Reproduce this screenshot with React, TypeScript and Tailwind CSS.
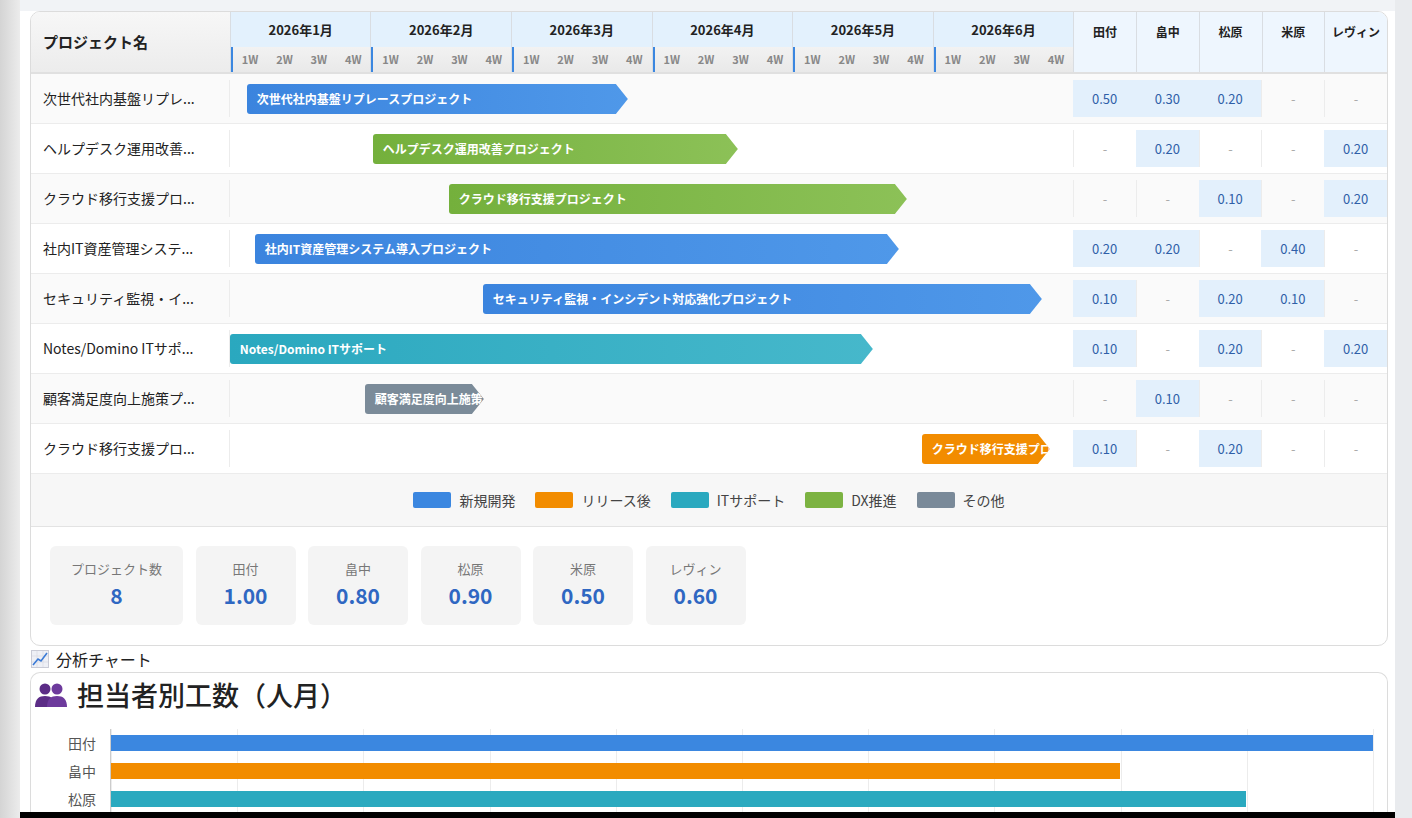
const months = ["2026年1月", "2026年2月", "2026年3月", "2026年4月", "2026年5月", "2026年6月"];
const members = ["田付", "畠中", "松原", "米原", "レヴィン"];

const colors: Record<string, string> = {
  dev: "bg-gradient-to-r from-[#3b84de] to-[#4f98e9]",
  green: "bg-gradient-to-r from-[#74b03c] to-[#8cc157]",
  teal: "bg-gradient-to-r from-[#2aa8bf] to-[#46b8cb]",
  gray: "bg-[#7b8b99]",
  orange: "bg-[#f28c00]",
};

const rows = [
  { short: "次世代社内基盤リプレ...", name: "次世代社内基盤リプレースプロジェクト", c: "dev", s: 17, e: 398, v: ["0.50", "0.30", "0.20", "-", "-"] },
  { short: "ヘルプデスク運用改善...", name: "ヘルプデスク運用改善プロジェクト", c: "green", s: 143, e: 508, v: ["-", "0.20", "-", "-", "0.20"] },
  { short: "クラウド移行支援プロ...", name: "クラウド移行支援プロジェクト", c: "green", s: 219, e: 677, v: ["-", "-", "0.10", "-", "0.20"] },
  { short: "社内IT資産管理システ...", name: "社内IT資産管理システム導入プロジェクト", c: "dev", s: 25, e: 669, v: ["0.20", "0.20", "-", "0.40", "-"] },
  { short: "セキュリティ監視・イ...", name: "セキュリティ監視・インシデント対応強化プロジェクト", c: "dev", s: 253, e: 812, v: ["0.10", "-", "0.20", "0.10", "-"] },
  { short: "Notes/Domino ITサポ...", name: "Notes/Domino ITサポート", c: "teal", s: 0, e: 643, v: ["0.10", "-", "0.20", "-", "0.20"] },
  { short: "顧客満足度向上施策プ...", name: "顧客満足度向上施策プロジェクト", c: "gray", s: 135, e: 254, v: ["-", "0.10", "-", "-", "-"] },
  { short: "クラウド移行支援プロ...", name: "クラウド移行支援プロジェクト", c: "orange", s: 692, e: 820, v: ["0.10", "-", "0.20", "-", "-"] },
];

const legend = [
  ["新規開発", "bg-[#3b87e0]"],
  ["リリース後", "bg-[#f28c00]"],
  ["ITサポート", "bg-[#2aa9bf]"],
  ["DX推進", "bg-[#7cb342]"],
  ["その他", "bg-[#7a8a99]"],
];

const stats = [
  ["プロジェクト数", "8", "w-[133px]"],
  ["田付", "1.00", "w-[100px]"],
  ["畠中", "0.80", "w-[100px]"],
  ["松原", "0.90", "w-[100px]"],
  ["米原", "0.50", "w-[100px]"],
  ["レヴィン", "0.60", "w-[100px]"],
];

const chart = [
  ["田付", 1262, "bg-[#3b87e0]"],
  ["畠中", 1009, "bg-[#f28c00]"],
  ["松原", 1135, "bg-[#2aa9bf]"],
] as const;

export default function App() {
  return (
    <div className="h-[818px] w-[1412px] overflow-hidden bg-[#eef0f3] flex text-[#222]" style={{ fontFamily: '"Noto Sans CJK JP", "Noto Sans", sans-serif' }}>
      <div className="w-[20px] shrink-0 bg-gradient-to-r from-[#d4d4d4] to-[#ececec]" />
      <div className="w-[1375px] shrink-0 bg-white flex flex-col">
        <div className="h-[11px] bg-[#f1f3f6] shrink-0" />
        <div className="flex-1 min-h-0 overflow-hidden px-[10px] flex flex-col">
          {/* Gantt card */}
          <div className="w-[1358px] shrink-0 border border-[#dcdcdc] rounded-[10px] overflow-hidden">
            <div className="flex h-[62px] border-b-2 border-[#e0e0e0]">
              <div className="w-[199px] bg-gradient-to-b from-[#f7f7f7] to-[#ececec] flex items-center pl-[12px] font-bold text-[15px]">プロジェクト名</div>
              {months.map((m) => (
                <div key={m} className="w-[140.67px] flex flex-col border-l border-[#d9dde2]">
                  <div className="h-[36px] bg-[#e3f1fd] flex items-center justify-center font-bold text-[13px]">{m}</div>
                  <div className="h-[26px] flex border-l-2 border-[#3b87e0] bg-gradient-to-b from-[#f2f2f2] to-[#e9e9e9]">
                    {["1W", "2W", "3W", "4W"].map((w) => (
                      <div key={w} className="flex-1 flex items-center justify-center text-[11px] text-[#888] font-semibold">{w}</div>
                    ))}
                  </div>
                </div>
              ))}
              {members.map((m) => (
                <div key={m} className="w-[62.8px] bg-[#eef6fe] border-l border-[#d9dde2] flex justify-center pt-[11px] font-bold text-[12px]">{m}</div>
              ))}
            </div>
            {rows.map((r, i) => (
              <div key={i} className={`flex h-[50px] border-b border-[#ececec] ${i % 2 === 0 ? "bg-[#fafafa]" : "bg-white"}`}>
                <div className="w-[199px] flex items-center pl-[12px] text-[14px] border-r border-[#ececec] my-[6px]">{r.short}</div>
                <div className="w-[844px] relative">
                  <div
                    className={`absolute top-[10px] h-[30px] rounded-l-[3px] overflow-hidden flex items-center pl-[10px] text-white text-[12px] font-bold whitespace-nowrap ${colors[r.c]}`}
                    style={{ left: r.s, width: r.e - r.s, clipPath: "polygon(0 0, calc(100% - 12px) 0, 100% 50%, calc(100% - 12px) 100%, 0 100%)" }}
                  >
                    {r.name}
                  </div>
                </div>
                {r.v.map((v, j) => (
                  <div key={j} className={`w-[62.8px] my-[6px] flex items-center justify-center text-[13px] ${v === "-" ? "text-[#aaa] border-l border-[#ececec]" : "bg-[#e3f0fc] text-[#2f5fa8]"}`}>{v}</div>
                ))}
              </div>
            ))}
            <div className="h-[53px] bg-[#f7f7f7] border-b border-[#e3e3e3] flex items-center justify-center gap-[20px] text-[14px] text-[#444]">
              {legend.map(([l, c]) => (
                <div key={l} className="flex items-center gap-[8px]">
                  <span className={`w-[38px] h-[16px] rounded-[2px] ${c}`} />
                  {l}
                </div>
              ))}
            </div>
            <div className="h-[118px] flex gap-[12.5px] pl-[19px] pt-[19px]">
              {stats.map(([l, v, w]) => (
                <div key={l} className={`${w} h-[79px] bg-[#f4f4f4] rounded-[6px] flex flex-col items-center pt-[13px]`}>
                  <div className="text-[13px] text-[#777]">{l}</div>
                  <div className="text-[21px] font-bold text-[#2f67c2] leading-[32px]">{v}</div>
                </div>
              ))}
            </div>
          </div>
          <div className="h-[26px] shrink-0 flex items-center gap-[7px] text-[16px] pl-[1px]">
            <svg width="18" height="18" viewBox="0 0 18 18">
              <rect x="0.5" y="0.5" width="17" height="17" fill="#eef0f6" stroke="#c9cbd6" />
              <path d="M6 1v16M12 1v16M1 6h16M1 12h16" stroke="#d8dae3" strokeWidth="0.7" />
              <path d="M2 15 L7 9 L10 11 L16 3" stroke="#3a7ad6" strokeWidth="1.6" fill="none" />
            </svg>
            分析チャート
          </div>
          <div className="w-[1358px] flex-1 border border-[#dcdcdc] rounded-t-[10px] border-b-0">
            <div className="flex items-center gap-[10px] pl-[4px] h-[44px] text-[27px] font-medium">
              <svg width="32" height="26" viewBox="0 0 32 26">
                <circle cx="10" cy="7" r="5.5" fill="#5b2c86" />
                <path d="M0 25c0-8 4-11 10-11s10 3 10 11z" fill="#5b2c86" />
                <circle cx="22" cy="7" r="5.5" fill="#6d3a9c" />
                <path d="M12 25c0-8 4-11 10-11s10 3 10 11z" fill="#6d3a9c" />
              </svg>
              担当者別工数（人月）
            </div>
            <div className="relative mt-[12px] ml-[79px] h-[90px] border-l border-[#ccc]">
              {Array.from({ length: 11 }).map((_, k) => (
                <div key={k} className="absolute top-0 bottom-0 border-l border-[#ececec]" style={{ left: k * 126.2 }} />
              ))}
              <div className="relative flex flex-col gap-[12px] pt-[6px]">
                {chart.map(([n, w, c]) => (
                  <div key={n} className="flex items-center h-[16px]">
                    <span className="absolute -left-[43px] text-[14px] text-[#555]">{n}</span>
                    <div className={`h-[16px] ${c}`} style={{ width: w }} />
                  </div>
                ))}
              </div>
            </div>
          </div>
        </div>
        <div className="h-[6px] bg-black shrink-0" />
      </div>
      <div className="flex-1 bg-[#e9ebee]" />
    </div>
  );
}
